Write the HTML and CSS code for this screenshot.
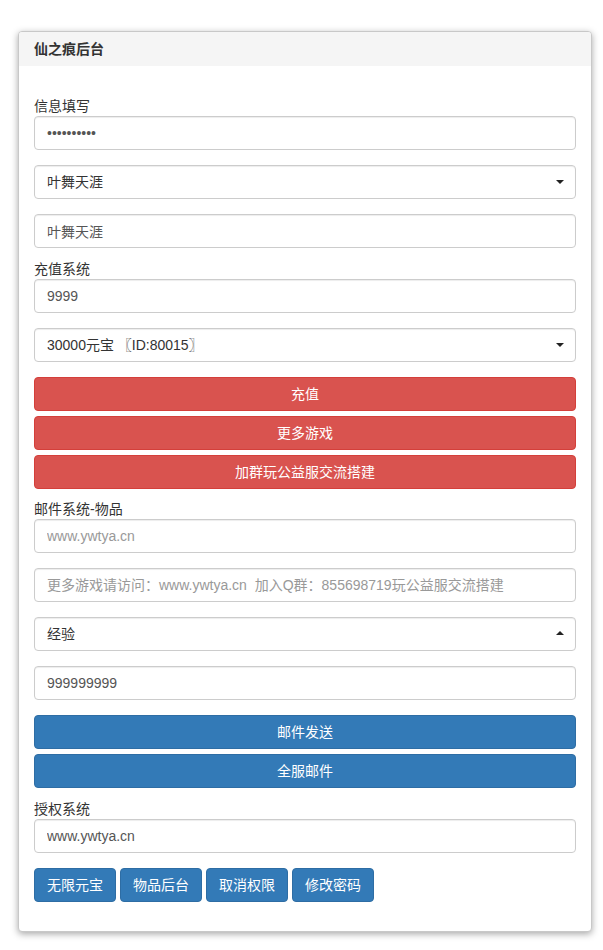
FILE: index.html
```html
<!DOCTYPE html>
<html lang="zh-CN">
<head>
<meta charset="utf-8">
<title>仙之痕后台</title>
<link rel="stylesheet" href="styles.css">
</head>
<body>
<div class="panel">
  <div class="panel-heading">仙之痕后台</div>
  <div class="panel-body">
    <label class="lbl lbl-first">信息填写</label>
    <input class="ctl gap" type="password" value="1234567890">
    <div class="sel gap down"><select class="ctl"><option>叶舞天涯</option></select></div>
    <input class="ctl gap-s" type="text" value="叶舞天涯">

    <label class="lbl">充值系统</label>
    <input class="ctl gap" type="text" value="9999">
    <div class="sel gap down"><select class="ctl"><option>30000元宝 〖ID:80015〗</option></select></div>
    <button class="btn btn-danger gap-xs">充值</button>
    <button class="btn btn-danger gap-xs">更多游戏</button>
    <button class="btn btn-danger gap-s2">加群玩公益服交流搭建</button>

    <label class="lbl">邮件系统-物品</label>
    <input class="ctl gap" type="text" placeholder="www.ywtya.cn">
    <input class="ctl gap" type="text" placeholder="更多游戏请访问：www.ywtya.cn  加入Q群：855698719玩公益服交流搭建">
    <div class="sel gap up"><select class="ctl"><option>经验</option></select></div>
    <input class="ctl gap" type="text" value="999999999">
    <button class="btn btn-primary gap-xs">邮件发送</button>
    <button class="btn btn-primary gap-s">全服邮件</button>

    <label class="lbl">授权系统</label>
    <input class="ctl gap" type="text" value="www.ywtya.cn">
    <div class="btn-row">
      <button class="btn btn-primary btn-inline">无限元宝</button>
      <button class="btn btn-primary btn-inline">物品后台</button>
      <button class="btn btn-primary btn-inline">取消权限</button>
      <button class="btn btn-primary btn-inline">修改密码</button>
    </div>
  </div>
</div>
</body>
</html>
```
FILE: styles.css
```css
* { box-sizing: border-box; }
html, body { background: #fff; }
body {
  margin: 0;
  padding: 31px 11px 18px 18px;
  font-family: "Liberation Sans", "Noto Sans CJK SC", sans-serif;
  font-size: 14px;
  line-height: 20px;
  color: #333;
}
.panel {
  border: 1px solid #c8c8c8;
  border-radius: 4px;
  background: #fff;
  box-shadow: 0 2px 7px rgba(0, 0, 0, 0.35);
  overflow: hidden;
}
.panel-heading {
  background: #f5f5f5;
  height: 34px;
  line-height: 35px;
  padding: 0 15px;
  font-weight: bold;
  font-size: 14px;
  color: #333;
}
.panel-body {
  display: flex;
  flex-direction: column;
  padding: 30px 15px 29px;
}
.lbl {
  display: block;
  height: 20px;
  line-height: 20px;
  color: #333;
}
.ctl {
  display: block;
  width: 100%;
  height: 34px;
  padding: 6px 12px;
  border: 1px solid #ccc;
  border-radius: 4px;
  background: #fff;
  font-family: inherit;
  font-size: 14px;
  line-height: 20px;
  color: #555;
  box-shadow: inset 0 1px 1px rgba(0, 0, 0, 0.075);
  outline: none;
}
.ctl::placeholder { color: #999; }
select.ctl {
  appearance: none;
  -webkit-appearance: none;
  color: #333;
}
.sel { position: relative; }
.sel::after {
  content: "";
  position: absolute;
  right: 12px;
  top: 15px;
  border-left: 4px solid transparent;
  border-right: 4px solid transparent;
}
.sel.down::after { border-top: 4px solid #222; }
.sel.up::after { border-bottom: 4px solid #222; top: 14px; }
.gap { margin-bottom: 15px; }
.gap-s { margin-bottom: 11px; }
.gap-s2 { margin-bottom: 10px; }
.gap-xs { margin-bottom: 5px; }
.btn {
  display: block;
  width: 100%;
  height: 34px;
  padding: 6px 12px;
  border: 1px solid transparent;
  border-radius: 4px;
  font-family: inherit;
  font-size: 14px;
  line-height: 20px;
  color: #fff;
  text-align: center;
  cursor: pointer;
}
.btn-danger { background: #d9534f; border-color: #d43f3a; }
.btn-primary { background: #337ab7; border-color: #2e6da4; }
.btn-row {
  display: flex;
  gap: 4px;
}
.btn-inline {
  width: auto;
  display: inline-block;
}
```
